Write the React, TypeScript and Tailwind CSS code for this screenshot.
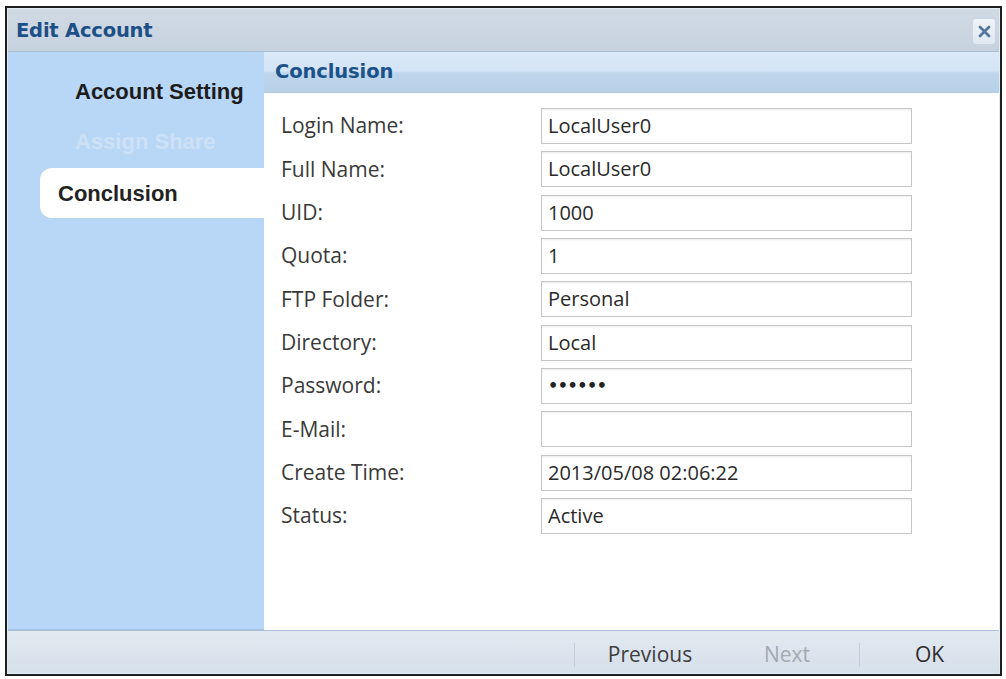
import React from 'react';

interface Field {
  label: string;
  value: string;
}

const fields: Field[] = [
  { label: 'Login Name:', value: 'LocalUser0' },
  { label: 'Full Name:', value: 'LocalUser0' },
  { label: 'UID:', value: '1000' },
  { label: 'Quota:', value: '1' },
  { label: 'FTP Folder:', value: 'Personal' },
  { label: 'Directory:', value: 'Local' },
  { label: 'Password:', value: '••••••' },
  { label: 'E-Mail:', value: '' },
  { label: 'Create Time:', value: '2013/05/08 02:06:22' },
  { label: 'Status:', value: 'Active' },
];

export default function App() {
  return (
    <div className="w-[1006px] h-[679px] bg-white pl-[5px] pt-[6px]">
      {/* Window frame */}
      <div className="w-[997px] h-[670px] border-2 border-[#1f1f1f] bg-[#e4eaf1] p-[1px] flex flex-col">
        {/* Title bar */}
        <div className="h-[43px] flex items-center justify-between pl-[8px] pr-[4px] pt-[2px] bg-[linear-gradient(to_bottom,#d0dae5,#c6d2de)] border-b border-[#a9bdd3]">
          <span className="font-['DejaVu_Sans',sans-serif] font-bold text-[19.5px] text-[#1c4f86] tracking-[-0.2px]">
            Edit Account
          </span>
          <div className="w-[22px] h-[25px] rounded-[3px] bg-[linear-gradient(to_bottom,#eef3f8,#e0e8f0)] flex items-center justify-center">
            <svg width="13" height="13" viewBox="0 0 13 13">
              <path d="M2 2 L11 11 M11 2 L2 11" stroke="#56769c" strokeWidth="2.8" strokeLinecap="round" />
            </svg>
          </div>
        </div>

        {/* Body */}
        <div className="flex flex-1">
          {/* Sidebar */}
          <div className="w-[256px] bg-[#b8d6f6] border-b border-[#a6c4e4] pt-[14px] font-['Liberation_Sans',sans-serif] font-bold text-[22px]">
            <div className="h-[50px] flex items-center pl-[67px] text-[#1c1c1c]">Account Setting</div>
            <div className="h-[50px] flex items-center pl-[67px] text-[#cde1f6]">Assign Share</div>
            <div className="mt-[2px] h-[50px] ml-[32px] rounded-l-[12px] bg-white flex items-center pl-[18px] text-[#222]">
              Conclusion
            </div>
          </div>

          {/* Content */}
          <div className="flex-1 flex flex-col bg-white">
            <div className="h-[41px] flex items-center pl-[11px] bg-[linear-gradient(to_bottom,#dae9f8_0%,#d3e4f6_48%,#bdd6ec_52%,#b7d1e9_100%)] border-b border-[#b0cbe3]">
              <span className="font-['DejaVu_Sans',sans-serif] font-bold text-[19.5px] text-[#1d5189] tracking-[-0.1px]">
                Conclusion
              </span>
            </div>
            <div className="flex-1 pt-[15px] flex flex-col gap-[7.33px] font-['Open_Sans',sans-serif]">
              {fields.map((f) => (
                <div key={f.label} className="flex items-center h-[36px]">
                  <div className="w-[277px] pl-[17px] text-[21px] text-[#3a3a3a]">{f.label}</div>
                  <div className="w-[371px] h-[36px] border border-[#c6c6c6] shadow-[inset_0_1px_2px_rgba(0,0,0,0.08)] flex items-center pl-[6px] text-[20px] text-[#2a2a2a]">
                    {f.label === 'Password:' ? (
                      <span className="font-['DejaVu_Sans',sans-serif] text-[16px] font-bold tracking-[-0.5px] text-[#222]">
                        {f.value}
                      </span>
                    ) : (
                      f.value
                    )}
                  </div>
                </div>
              ))}
            </div>
          </div>
        </div>

        {/* Footer */}
        <div className="h-[43px] flex items-center justify-end pt-[6px] bg-[linear-gradient(to_bottom,#e2e9f1,#d6e0ea)] border-t border-[#a9c0d8] font-['Open_Sans',sans-serif] text-[21px]">
          <div className="w-[1px] h-[24px] bg-[#c2cfdc]" />
          <div className="w-[150px] text-center text-[#3e3e3e]">Previous</div>
          <div className="w-[124px] text-center text-[#a3a9b0]">Next</div>
          <div className="w-[1px] h-[24px] bg-[#c2cfdc] ml-[10px]" />
          <div className="w-[139px] text-center text-[#2e2e2e]">OK</div>
        </div>
      </div>
    </div>
  );
}
